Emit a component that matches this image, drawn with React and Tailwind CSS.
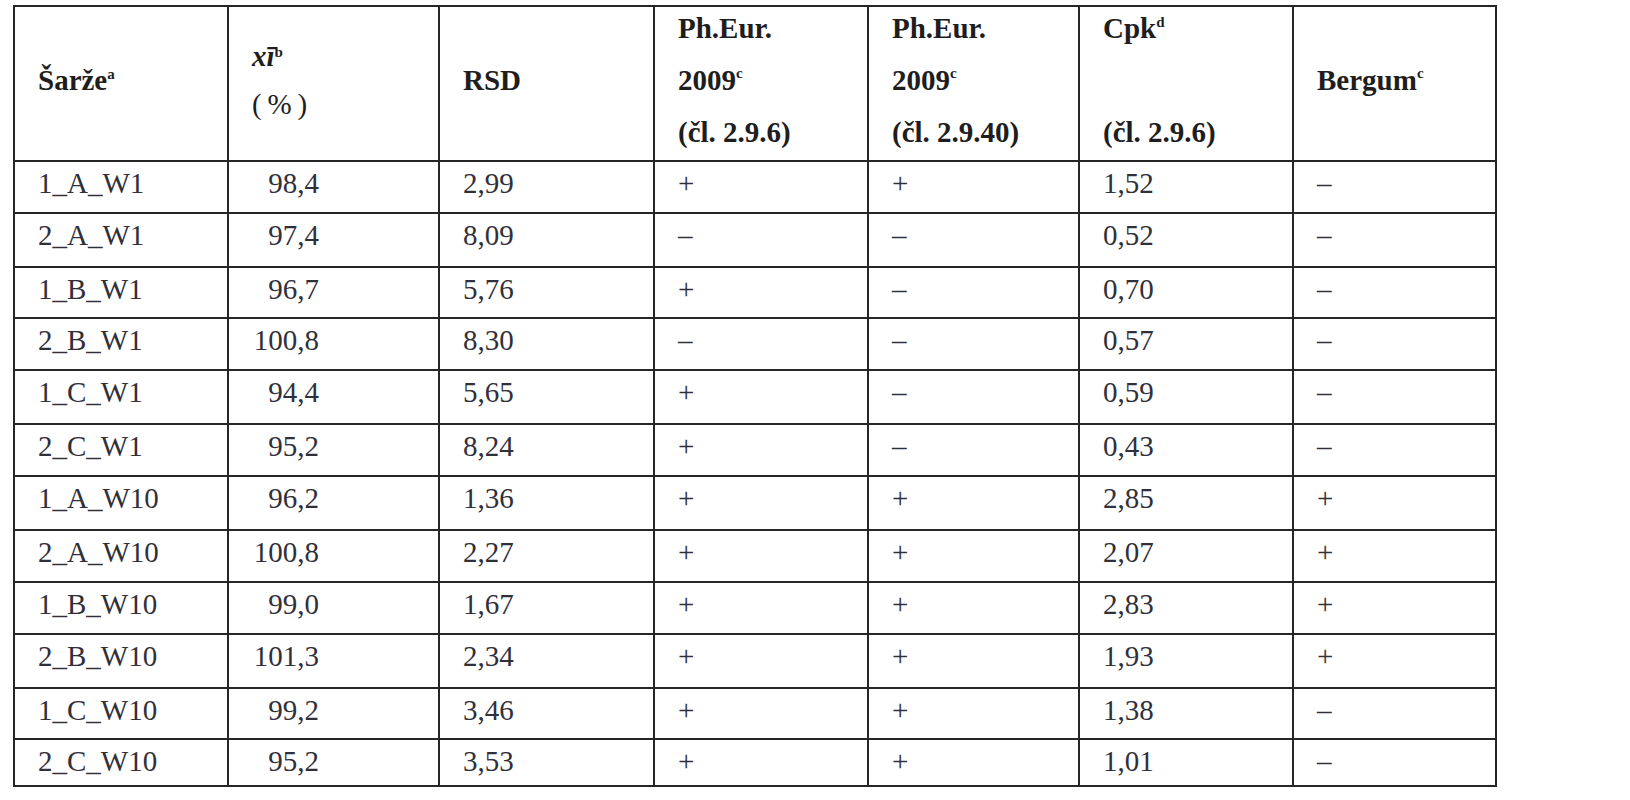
import React from "react";

const rows = [
  ["1_A_W1", "98,4", "2,99", "+", "+", "1,52", "–"],
  ["2_A_W1", "97,4", "8,09", "–", "–", "0,52", "–"],
  ["1_B_W1", "96,7", "5,76", "+", "–", "0,70", "–"],
  ["2_B_W1", "100,8", "8,30", "–", "–", "0,57", "–"],
  ["1_C_W1", "94,4", "5,65", "+", "–", "0,59", "–"],
  ["2_C_W1", "95,2", "8,24", "+", "–", "0,43", "–"],
  ["1_A_W10", "96,2", "1,36", "+", "+", "2,85", "+"],
  ["2_A_W10", "100,8", "2,27", "+", "+", "2,07", "+"],
  ["1_B_W10", "99,0", "1,67", "+", "+", "2,83", "+"],
  ["2_B_W10", "101,3", "2,34", "+", "+", "1,93", "+"],
  ["1_C_W10", "99,2", "3,46", "+", "+", "1,38", "–"],
  ["2_C_W10", "95,2", "3,53", "+", "+", "1,01", "–"],
];

const cell = "border-r-2 border-b-2 border-[#262626] pl-[23px]";
const head = cell + " flex flex-col justify-center pb-[8px] font-bold text-[#1e1e1e]";
const body = cell + " flex items-start pt-[4px] leading-[34px] text-[#30303a]";

function Sup({ children, top = "top-[-12px]" }) {
  return (
    <sup className={"relative not-italic text-[15px] leading-none " + top}>{children}</sup>
  );
}

export default function App() {
  return (
    <div className="min-h-[800px] w-[1630px] bg-white pt-[5px] pl-[13px] font-['Liberation_Serif',serif] text-[29px]">
      <div className="grid w-[1484px] grid-cols-[214px_211px_215px_214px_211px_214px_203px] grid-rows-[155px_52px_54px_51px_52px_54px_52px_54px_52px_52px_54px_51px_47px] border-l-2 border-t-2 border-[#262626]">
        <div className={head + " leading-[52px]"}>
          <div>
            Šarže<Sup top="top-[-11px]">a</Sup>
          </div>
        </div>
        <div className={head + " leading-[48px] pl-[20px]"}>
          <div>
            <span className="italic">xī</span>
            <Sup top="top-[-9px]">b</Sup>
          </div>
          <div className="font-normal">(&#8201;%&#8201;)</div>
        </div>
        <div className={head + " leading-[52px]"}>
          <div>RSD</div>
        </div>
        <div className={head + " leading-[52px]"}>
          <div>Ph.Eur.</div>
          <div>
            2009<Sup>c</Sup>
          </div>
          <div>(čl. 2.9.6)</div>
        </div>
        <div className={head + " leading-[52px]"}>
          <div>Ph.Eur.</div>
          <div>
            2009<Sup>c</Sup>
          </div>
          <div>(čl. 2.9.40)</div>
        </div>
        <div className={head + " leading-[52px]"}>
          <div>
            Cpk<Sup top="top-[-11px]">d</Sup>
          </div>
          <div>&nbsp;</div>
          <div>(čl. 2.9.6)</div>
        </div>
        <div className={head + " leading-[52px]"}>
          <div>
            Bergum<Sup>c</Sup>
          </div>
        </div>
        {rows.map((r, i) => (
          <React.Fragment key={i}>
            <div className={body}>{r[0]}</div>
            <div className={body + " pl-[22px]"}>
              <span className="inline-block w-[67px] text-right">{r[1]}</span>
            </div>
            <div className={body}>{r[2]}</div>
            <div className={body}>{r[3]}</div>
            <div className={body}>{r[4]}</div>
            <div className={body}>{r[5]}</div>
            <div className={body}>{r[6]}</div>
          </React.Fragment>
        ))}
      </div>
    </div>
  );
}
